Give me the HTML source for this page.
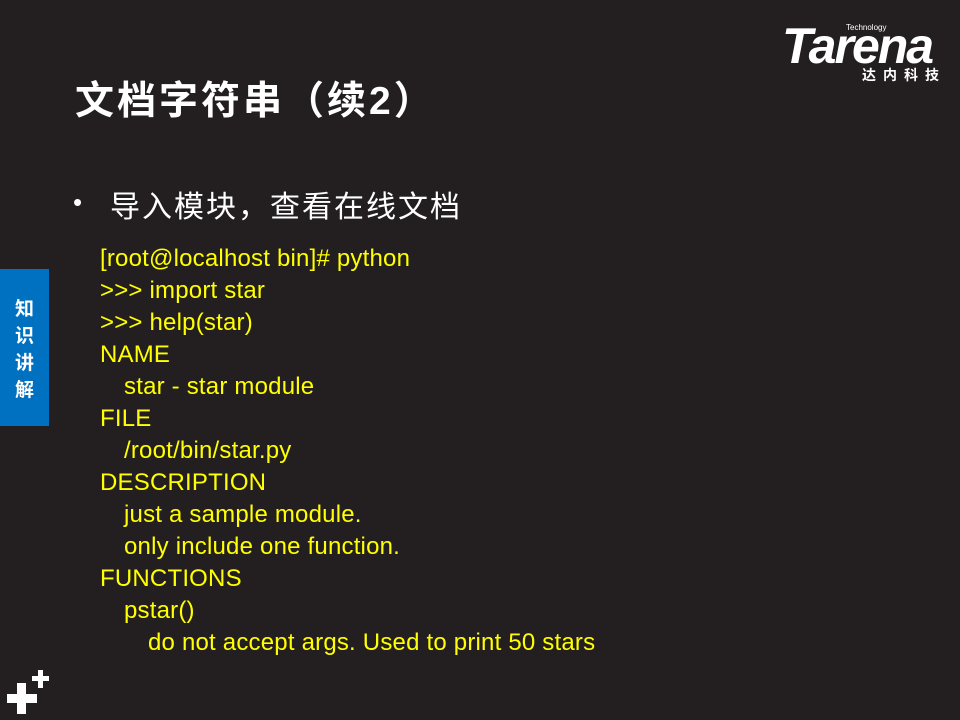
<!DOCTYPE html>
<html><head><meta charset="utf-8"><style>
body{margin:0;width:960px;height:720px;background:#231f20;position:relative;overflow:hidden;font-family:"Liberation Sans","Noto Sans CJK SC",sans-serif}
.t{position:absolute;left:75px;top:70px;color:#fff;font-size:39px;font-weight:bold;white-space:nowrap;letter-spacing:3px}
.bd{position:absolute;left:73px;top:187px;color:#fff;font-size:26px}
.b{position:absolute;left:110px;top:182px;color:#fff;font-size:30px;white-space:nowrap;letter-spacing:2px}
.code{position:absolute;left:100px;top:243px;color:#ffff00;font-size:24px;line-height:32px;white-space:pre;font-family:"Liberation Sans",sans-serif;letter-spacing:0.2px}
.i1{margin-left:24px}.i2{margin-left:48px}
.tab{position:absolute;left:0;top:269px;width:49px;height:157px;background:#0070c0;color:#fff;font-size:19px;font-weight:bold;line-height:27px;text-align:center;padding-top:27px;box-sizing:border-box}
.logo{position:absolute;left:780px;top:18px;color:#fff}
</style></head><body>
<div class="logo">
<div style="position:absolute;left:66px;top:5px;font-size:8px">Technology</div>
<div style="position:absolute;left:2px;top:6px;font-size:50px;font-weight:bold;font-style:italic;letter-spacing:-2px;line-height:44px">Tarena</div>
<div style="position:absolute;left:82px;top:47px;font-size:14px;font-weight:bold;letter-spacing:7px;white-space:nowrap">达内科技</div>
</div>
<div class="t">文档字符串（续2）</div>
<div class="bd">•</div>
<div class="b">导入模块，查看在线文档</div>
<div class="code"><div>[root@localhost bin]# python</div><div>&gt;&gt;&gt; import star</div><div>&gt;&gt;&gt; help(star)</div><div>NAME</div><div class="i1">star - star module</div><div>FILE</div><div class="i1">/root/bin/star.py</div><div>DESCRIPTION</div><div class="i1">just a sample module.</div><div class="i1">only include one function.</div><div>FUNCTIONS</div><div class="i1">pstar()</div><div class="i2">do not accept args. Used to print 50 stars</div></div>
<div class="tab">知<br>识<br>讲<br>解</div>
<svg style="position:absolute;left:0;top:660px" width="60" height="60">
<rect x="7" y="34" width="30" height="9" fill="#fff"/>
<rect x="17" y="23" width="9" height="31" fill="#fff"/>
<rect x="32" y="16" width="17" height="5" fill="#fff"/>
<rect x="38" y="10" width="5" height="18" fill="#fff"/>
</svg>
</body></html>
